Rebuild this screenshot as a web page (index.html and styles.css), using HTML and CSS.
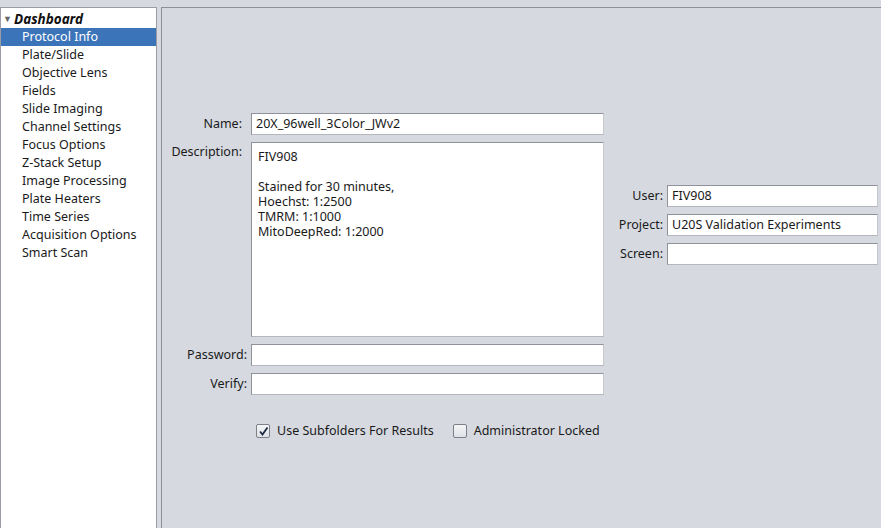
FILE: index.html
```html
<!DOCTYPE html>
<html lang="en">
<head>
    <meta charset="UTF-8">
    <title>Protocol Info</title>
    <link rel="stylesheet" href="styles.css">
</head>
<body>
    <div class="app">
        <div class="sidebar">
            <div class="tree-root"><span class="arrow">&#9660;</span>Dashboard</div>
            <div class="tree-item selected">Protocol Info</div>
            <div class="tree-item">Plate/Slide</div>
            <div class="tree-item">Objective Lens</div>
            <div class="tree-item">Fields</div>
            <div class="tree-item">Slide Imaging</div>
            <div class="tree-item">Channel Settings</div>
            <div class="tree-item">Focus Options</div>
            <div class="tree-item">Z-Stack Setup</div>
            <div class="tree-item">Image Processing</div>
            <div class="tree-item">Plate Heaters</div>
            <div class="tree-item">Time Series</div>
            <div class="tree-item">Acquisition Options</div>
            <div class="tree-item">Smart Scan</div>
        </div>

        <div class="main">
            <div class="left-form">
                <div class="grid">
                    <label class="lbl lbl-in">Name:</label>
                    <div class="field">20X_96well_3Color_JWv2</div>

                    <label class="lbl lbl-in lbl-top">Description:</label>
                    <div class="field area">
                        <div class="line">FIV908</div>
                        <div class="line"></div>
                        <div class="line">Stained for 30 minutes,</div>
                        <div class="line">Hoechst: 1:2500</div>
                        <div class="line">TMRM: 1:1000</div>
                        <div class="line">MitoDeepRed: 1:2000</div>
                    </div>

                    <label class="lbl">Password:</label>
                    <div class="field"></div>

                    <label class="lbl">Verify:</label>
                    <div class="field"></div>
                </div>

                <div class="checks">
                    <span class="check"><span class="box"><svg width="11" height="11" viewBox="0 0 11 11"><path d="M2 5.5 L4.5 8.5 L9.5 1.5" fill="none" stroke="#1d2a44" stroke-width="1.8"/></svg></span>Use Subfolders For Results</span>
                    <span class="check"><span class="box"></span>Administrator Locked</span>
                </div>
            </div>

            <div class="right-form">
                <label class="lbl">User:</label>
                <div class="field">FIV908</div>

                <label class="lbl">Project:</label>
                <div class="field">U20S Validation Experiments</div>

                <label class="lbl">Screen:</label>
                <div class="field"></div>
            </div>
        </div>
    </div>
</body>
</html>
```

FILE: styles.css
```css
body {
    margin: 0;
    background-color: #d6d9e0;
    font-family: "Noto Sans", "Open Sans", sans-serif;
    font-size: 12.5px;
    color: #1a1a1a;
}
.app {
    display: flex;
    gap: 4px;
    height: 521px;
    padding-top: 7px;
    overflow: hidden;
}
.sidebar {
    width: 155px;
    flex: none;
    background: white;
    border: 1px solid #9c9ca8;
    border-bottom: none;
    padding-top: 2px;
}
.tree-root {
    height: 18px;
    line-height: 18px;
    font-size: 13.5px;
    font-weight: bold;
    font-style: italic;
    color: #111;
}
.arrow {
    display: inline-block;
    width: 13px;
    font-size: 9px;
    font-style: normal;
    color: #666;
    text-align: center;
    vertical-align: top;
}
.tree-item {
    height: 18px;
    line-height: 18px;
    padding-left: 21px;
}
.tree-item.selected {
    background-color: #3c74ba;
    color: white;
}
.main {
    flex: 1;
    display: flex;
    align-items: flex-start;
    border-left: 1px solid #8e9099;
    border-top: 1px solid #8e9099;
}
.left-form {
    margin-top: 105px;
    padding-left: 8px;
}
.grid {
    display: grid;
    grid-template-columns: 77px 353px;
    column-gap: 4px;
    row-gap: 7px;
}
.lbl {
    text-align: right;
    line-height: 22px;
    white-space: nowrap;
}
.lbl-in {
    padding-right: 5px;
}
.lbl-top {
    line-height: 20px;
}
.field {
    box-sizing: border-box;
    height: 22px;
    line-height: 20px;
    padding-left: 4px;
    background: white;
    border: 1px solid;
    border-color: #8f929a #c6c8ce #b4b7be #8f929a;
    white-space: nowrap;
}
.field.area {
    height: 195px;
    padding: 6px 6px;
}
.line {
    height: 15px;
    line-height: 15px;
}
.checks {
    display: flex;
    gap: 19px;
    margin-top: 29px;
    padding-left: 86px;
}
.check {
    display: flex;
    align-items: center;
    gap: 7px;
    line-height: 14px;
}
.box {
    box-sizing: border-box;
    width: 14px;
    height: 14px;
    border: 1px solid #7d8089;
    border-radius: 2px;
    background: linear-gradient(#f4f5f7, #dfe1e6);
    display: flex;
    align-items: center;
    justify-content: center;
}
.right-form {
    margin-top: 177px;
    margin-left: 12px;
    display: grid;
    grid-template-columns: 47px 211px;
    column-gap: 4px;
    row-gap: 7px;
}
```
